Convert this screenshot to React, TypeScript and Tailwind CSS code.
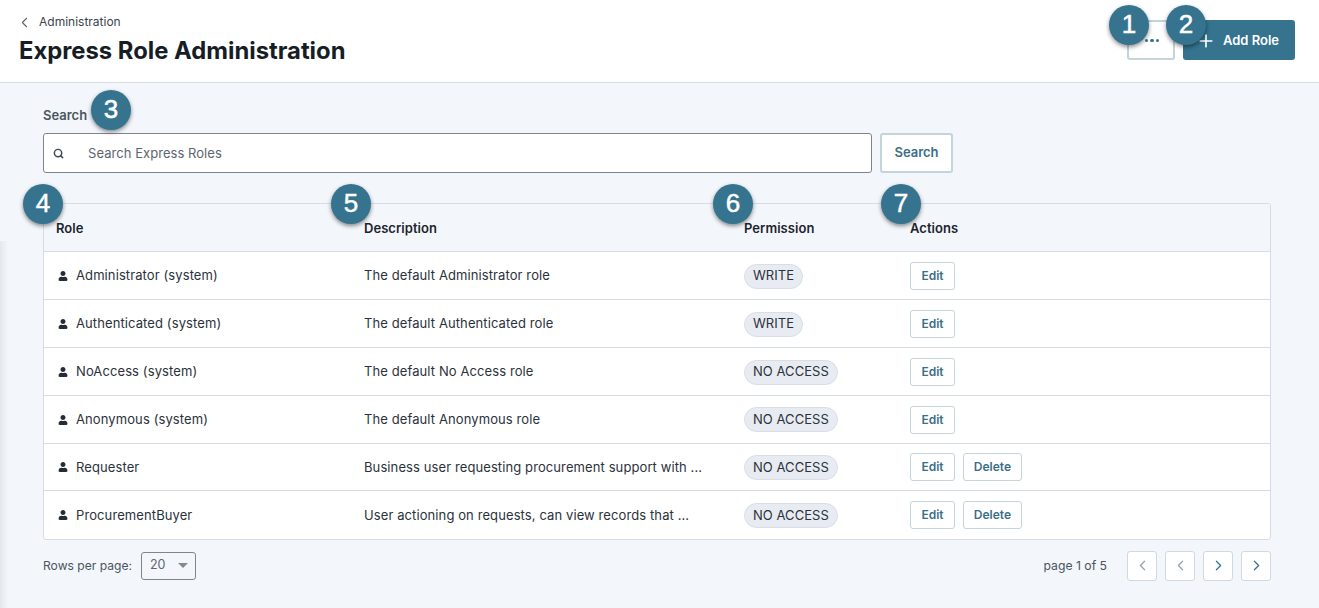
import React from "react";
import { ChevronLeft, ChevronRight, Plus, Search } from "lucide-react";
import { FaUser } from "react-icons/fa";

type Role = {
  name: string;
  description: string;
  permission: string;
  canDelete?: boolean;
};

const ROLES: Role[] = [
  { name: "Administrator (system)", description: "The default Administrator role", permission: "WRITE" },
  { name: "Authenticated (system)", description: "The default Authenticated role", permission: "WRITE" },
  { name: "NoAccess (system)", description: "The default No Access role", permission: "NO ACCESS" },
  { name: "Anonymous (system)", description: "The default Anonymous role", permission: "NO ACCESS" },
  {
    name: "Requester",
    description: "Business user requesting procurement support with ...",
    permission: "NO ACCESS",
    canDelete: true,
  },
  {
    name: "ProcurementBuyer",
    description: "User actioning on requests, can view records that ...",
    permission: "NO ACCESS",
    canDelete: true,
  },
];

const MARKERS = [
  { n: 1, cls: "left-[1109px] top-[5px]" },
  { n: 2, cls: "left-[1166px] top-[5px]" },
  { n: 3, cls: "left-[91px] top-[90px]" },
  { n: 4, cls: "left-[23px] top-[184px]" },
  { n: 5, cls: "left-[331px] top-[184px]" },
  { n: 6, cls: "left-[713px] top-[184px]" },
  { n: 7, cls: "left-[881px] top-[184px]" },
];

function SmallButton({ label }: { label: string }) {
  return (
    <button
      type="button"
      className="flex h-[28px] min-w-[45px] items-center justify-center rounded-[3px] border border-[#c5d3da] bg-white px-[9.75px] text-[12px] font-semibold tracking-[0.02px] text-[#3b6f86]"
    >
      {label}
    </button>
  );
}

function PageButton({ dir, dim }: { dir: "left" | "right"; dim?: boolean }) {
  const color = dim ? "text-[#9aa3ab]" : "text-[#35738f]";
  return (
    <button
      type="button"
      className="flex h-[30px] w-[30px] items-center justify-center rounded-[3px] border border-[#d0d9df] bg-white"
    >
      {dir === "left" ? (
        <ChevronLeft size={17} strokeWidth={1.75} className={color} />
      ) : (
        <ChevronRight size={17} strokeWidth={1.75} className={color} />
      )}
    </button>
  );
}

export default function App() {
  return (
    <div className="relative h-[608px] overflow-hidden bg-[#f3f7fb] font-['Inter',sans-serif] text-[#1d242d]">
      <header className="flex h-[83px] items-start justify-between border-b border-[#d5dde2] bg-white pl-[19px] pr-[24px]">
        <div>
          <div className="mt-[14px] flex h-[16px] items-center text-[12px] text-[#3c444c]">
            <ChevronLeft size={17} strokeWidth={1.5} className="-ml-[3px] mr-[6px] text-[#5b636b]" />
            Administration
          </div>
          <h1 className="mt-[4px] text-[23.8px] font-bold leading-[34px] text-[#171d25]">
            Express Role Administration
          </h1>
        </div>
        <div className="mt-[20px] flex gap-[8px]">
          <button
            type="button"
            className="flex h-[40px] w-[48px] items-center justify-center gap-[2px] rounded-[3px] border-2 border-[#c5d3da] bg-white pl-[2px] pt-[1px]"
          >
            <span className="h-[3.5px] w-[3.5px] rounded-full bg-[#35738f]" />
            <span className="h-[3.5px] w-[3.5px] rounded-full bg-[#35738f]" />
            <span className="h-[3.5px] w-[3.5px] rounded-full bg-[#35738f]" />
          </button>
          <button
            type="button"
            className="flex h-[40px] w-[112px] items-center justify-end gap-[7px] rounded-[3px] bg-[#35738f] pr-[16px] pt-[1px] text-[13px] font-semibold text-white"
          >
            <Plus size={20} strokeWidth={2} />
            Add Role
          </button>
        </div>
      </header>

      <main className="pl-[43px] pr-[48px]">
        <label className="mt-[24px] block text-[13px] font-semibold leading-[16px] text-[#4b555e]">
          Search
        </label>
        <div className="mt-[10px] flex gap-[8px]">
          <div className="flex h-[40px] w-[829px] items-center rounded-[3px] border border-[#7d868e] bg-white pl-[9px] pt-[1px]">
            <Search size={11} strokeWidth={3.25} className="text-[#3f4a53]" />
            <span className="ml-[24px] text-[13px] tracking-[0.05px] text-[#5d666e]">Search Express Roles</span>
          </div>
          <button
            type="button"
            className="h-[40px] w-[73px] rounded-[3px] border-2 border-[#c5d3da] bg-white text-[13px] font-semibold text-[#3b6f86]"
          >
            Search
          </button>
        </div>

        <div className="mt-[30px] overflow-hidden rounded-[3px] border border-[#d5dde2] bg-white">
          <div className="grid h-[48px] grid-cols-[308px_380px_166px_1fr] items-end border-b border-[#d5dde2] bg-[#f3f7fb] pb-[15px] text-[13px] font-semibold leading-[16px] tracking-[0.05px] text-[#1d242d]">
            <div className="px-[12px]">Role</div>
            <div className="px-[12px]">Description</div>
            <div className="px-[12px]">Permission</div>
            <div className="px-[12px]">Actions</div>
          </div>
          {ROLES.map((role, i) => (
            <div
              key={role.name}
              className={
                "grid grid-cols-[308px_380px_166px_1fr] items-center text-[13px] tracking-[0.1px] text-[#2b323a] " +
                (i < 3 ? "h-[48px] pt-[1px] " : "h-[47.6px] pt-[1px] ") +
                (i < ROLES.length - 1 ? "border-b border-[#d5dde2]" : "")
              }
            >
              <div className="flex items-center px-[12px]">
                <FaUser className="ml-[2px] mr-[8px] h-[10px] w-[10px] text-[#252c35]" />
                {role.name}
              </div>
              <div className="truncate px-[12px]">{role.description}</div>
              <div className="px-[12px]">
                <span className="inline-flex h-[25px] items-center rounded-full border border-[#d8dee6] bg-[#e8ecf2] px-[8px] text-[13px] tracking-[0.05px] text-[#2b323a]">
                  {role.permission}
                </span>
              </div>
              <div className="flex gap-[8px] px-[12px] tracking-normal">
                <SmallButton label="Edit" />
                {role.canDelete && <SmallButton label="Delete" />}
              </div>
            </div>
          ))}
        </div>

        <div className="mt-[11px] flex items-center justify-between">
          <div className="flex items-center text-[12.1px] text-[#4b555e]">
            Rows per page:
            <div className="ml-[9px] flex h-[28px] w-[55px] items-center justify-between rounded-[3px] border border-[#7d868e] pl-[8px] pr-[7px] text-[12.5px] text-[#5d666e]">
              20
              <span className="h-0 w-0 border-x-[5px] border-t-[5px] border-x-transparent border-t-[#83898f]" />
            </div>
          </div>
          <div className="flex items-center">
            <span className="mr-[20px] text-[12.2px] text-[#4b555e]">page 1 of 5</span>
            <div className="flex gap-[8px]">
              <PageButton dir="left" dim />
              <PageButton dir="left" dim />
              <PageButton dir="right" />
              <PageButton dir="right" />
            </div>
          </div>
        </div>
      </main>

      {/* sidebar shadow peeking in on the left */}
      <div className="absolute bottom-0 left-0 top-[241px] w-[8px] bg-gradient-to-r from-[#e4e8ec] to-transparent" />

      {MARKERS.map((m) => (
        <div
          key={m.n}
          className={
            "absolute flex h-[40px] w-[40px] items-center justify-center rounded-full bg-[#35738f] pb-[2px] font-['Liberation_Sans',sans-serif] text-[26px] text-white shadow-[0_2px_4px_rgba(0,0,0,0.45)] [-webkit-text-stroke:0.5px_white] " +
            m.cls
          }
        >
          {m.n}
        </div>
      ))}
    </div>
  );
}
